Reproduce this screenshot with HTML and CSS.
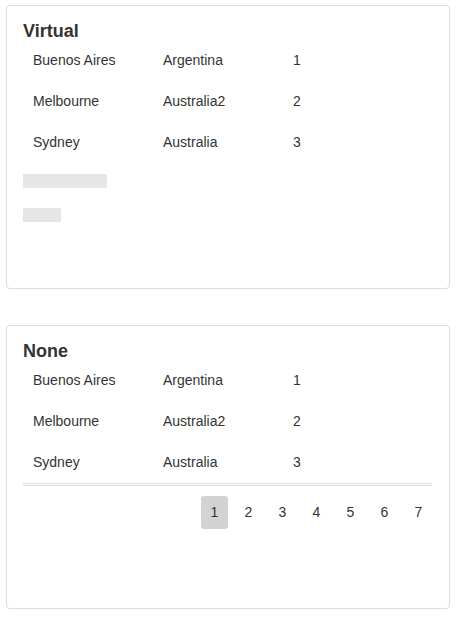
FILE: index.html
```html
<!DOCTYPE html>
<html>
<head>
<meta charset="utf-8">
<link rel="stylesheet" href="styles.css">
</head>
<body>
<div class="page">
  <section class="card">
    <h2 class="title">Virtual</h2>
    <div class="rows">
      <div class="row"><span>Buenos Aires</span><span>Argentina</span><span>1</span></div>
      <div class="row"><span>Melbourne</span><span>Australia2</span><span>2</span></div>
      <div class="row"><span>Sydney</span><span>Australia</span><span>3</span></div>
    </div>
    <div class="skeleton">
      <div class="bar bar-long"></div>
      <div class="bar bar-short"></div>
    </div>
  </section>
  <section class="card">
    <h2 class="title">None</h2>
    <div class="rows">
      <div class="row"><span>Buenos Aires</span><span>Argentina</span><span>1</span></div>
      <div class="row"><span>Melbourne</span><span>Australia2</span><span>2</span></div>
      <div class="row"><span>Sydney</span><span>Australia</span><span>3</span></div>
    </div>
    <div class="pager">
      <span class="page-btn active">1</span>
      <span class="page-btn">2</span>
      <span class="page-btn">3</span>
      <span class="page-btn">4</span>
      <span class="page-btn">5</span>
      <span class="page-btn">6</span>
      <span class="page-btn">7</span>
    </div>
  </section>
</div>
</body>
</html>
```

FILE: styles.css
```css
html, body {
  margin: 0;
  padding: 0;
  background: #fff;
}
body {
  font-family: "Liberation Sans", Arial, sans-serif;
  color: #333;
}
.page {
  padding: 5px 10px 0 6px;
  display: flex;
  flex-direction: column;
  gap: 36px;
}
.card {
  box-sizing: border-box;
  height: 284px;
  border: 1px solid #dcdcdc;
  border-radius: 4px;
  padding: 16px 17px 0 16px;
}
.title {
  margin: 0;
  font-size: 18px;
  line-height: 18px;
  font-weight: bold;
  color: #333;
}
.rows {
  display: flex;
  flex-direction: column;
}
.row {
  display: grid;
  grid-template-columns: 130px 130px 1fr;
  font-size: 14px;
  line-height: 17px;
}
.row span {
  padding: 12px 10px;
}
.skeleton {
  display: flex;
  flex-direction: column;
  gap: 20px;
  margin-top: 11px;
}
.bar {
  height: 14px;
  background: #e6e6e6;
}
.bar-long { width: 84px; }
.bar-short { width: 38px; }
.pager {
  border-top: 3px double #dcdcdc;
  padding-top: 10px;
  display: flex;
  justify-content: flex-end;
  gap: 7px;
}
.page-btn {
  width: 27px;
  height: 33px;
  line-height: 33px;
  text-align: center;
  font-size: 14px;
  border-radius: 3px;
  color: #333;
}
.page-btn.active {
  background: #d3d3d3;
}
```
